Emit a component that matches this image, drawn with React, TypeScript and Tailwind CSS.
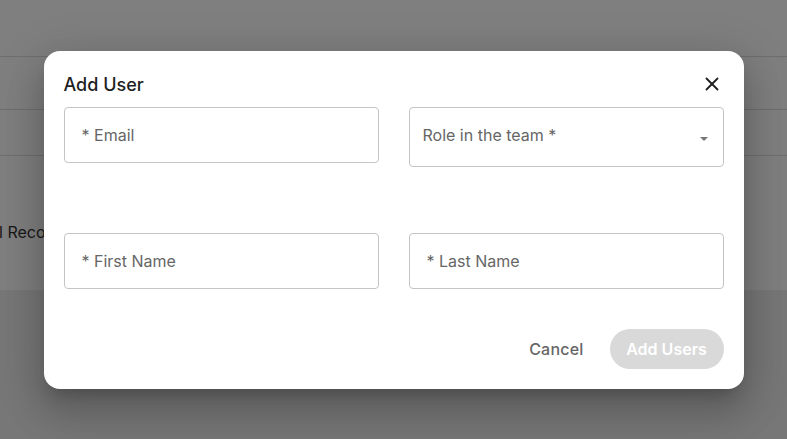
import React from "react";
import { X } from "lucide-react";

function Field({ label, tall, select }: { label: string; tall?: boolean; select?: boolean }) {
  return (
    <div
      className={`flex items-start justify-between rounded-[4px] border border-[#c4c4c4] bg-white pr-[16px] pt-[17px] ${
        tall ? "h-[60px] pl-[13px]" : "h-[56px] pl-[17px]"
      }`}
    >
      <span className="text-[16px] leading-[20px] text-[#666]">{label}</span>
      {select && (
        <svg width="8" height="4" viewBox="0 0 8 4" className="mt-[12px] mr-[-1px]">
          <path d="M0 0 L8 0 L4 4 Z" fill="#777" />
        </svg>
      )}
    </div>
  );
}

export default function App() {
  return (
    <div className="relative h-[439px] w-[787px] overflow-hidden bg-[#efefef] font-['Inter',sans-serif]">
      {/* page underneath */}
      <div className="bg-white">
        <div className="h-[57px] border-b border-[#dcdcdc]" />
        <div className="h-[53px] border-b border-[#dcdcdc]" />
        <div className="h-[46px] border-b border-[#dcdcdc]" />
        <div className="flex h-[134px] items-start pt-[64px]">
          <span className="ml-[-1px] text-[16px] text-[#333]">l Records</span>
        </div>
      </div>

      {/* overlay */}
      <div className="absolute inset-0 flex items-center justify-center bg-black/50">
        <div className="w-[700px] rounded-[16px] bg-white px-[20px] pb-[20px] pt-[20px] shadow-[0_11px_15px_-7px_rgba(0,0,0,0.2),0_24px_38px_3px_rgba(0,0,0,0.14),0_9px_46px_8px_rgba(0,0,0,0.12)]">
          <div className="flex h-[36px] items-start justify-between">
            <h2 className="text-[18px] font-medium leading-[28px] text-[#1f1f1f]">Add User</h2>
            <X size={22} strokeWidth={2} className="mt-[2px] mr-[1px] text-[#1f1f1f]" />
          </div>
          <div className="grid grid-cols-2 gap-x-[30px]">
            <div className="h-[126px]">
              <Field label="* Email" />
            </div>
            <div className="h-[126px]">
              <Field label="Role in the team *" tall select />
            </div>
            <Field label="* First Name" />
            <Field label="* Last Name" />
          </div>
          <div className="mt-[40px] flex items-center justify-end gap-[26px]">
            <button className="text-[16px] font-medium tracking-[0.2px] text-[#666]">Cancel</button>
            <button className="h-[40px] w-[114px] rounded-full bg-[#d9d9d9] text-[16px] font-semibold text-white">
              Add Users
            </button>
          </div>
        </div>
      </div>
    </div>
  );
}
